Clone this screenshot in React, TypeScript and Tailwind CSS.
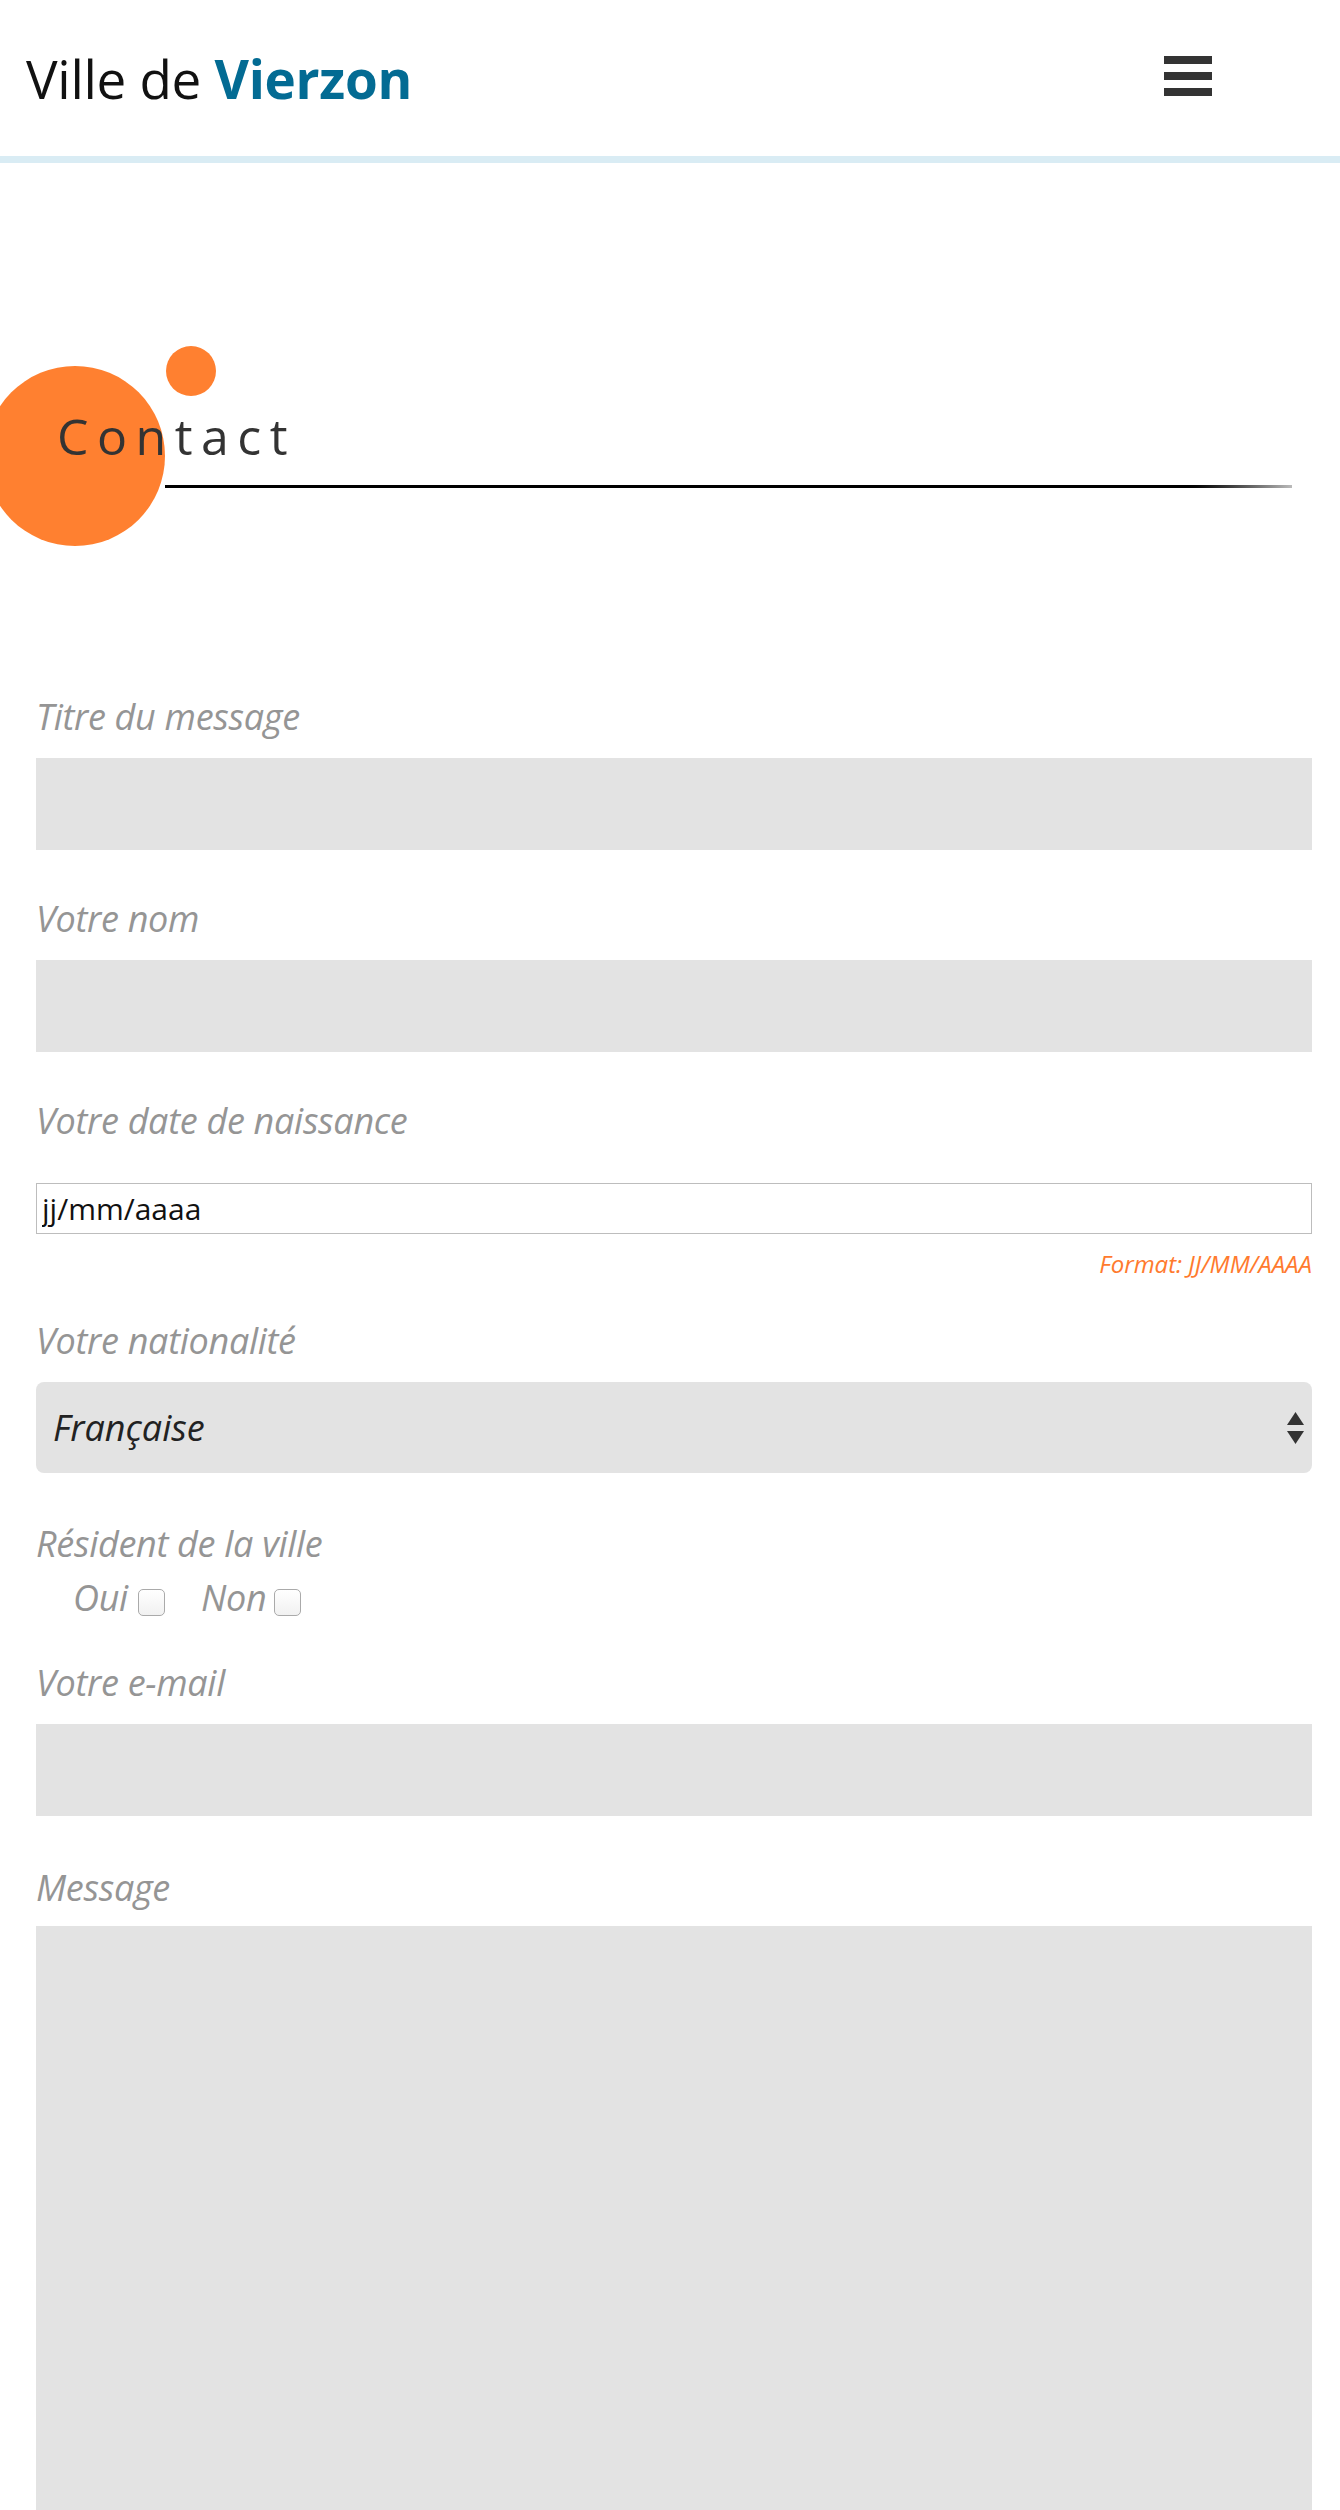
import React from "react";

const labelCls =
	"block h-[46px] leading-[46px] text-[36px] italic text-[#959595] font-['Open_Sans',sans-serif] tracking-[-0.3px]";

function Field({ label, children }: { label: string; children: React.ReactNode }) {
	return (
		<div className="flex flex-col">
			<label className={labelCls}>{label}</label>
			{children}
		</div>
	);
}

export default function App() {
	return (
		<div className="w-[1340px] bg-white font-['Open_Sans',sans-serif] overflow-hidden">
			{/* header */}
			<header className="flex h-[156px] items-center justify-between pl-[26px] pr-[128px]">
				<div className="text-[53px] leading-[53px] text-[#111] tracking-[-0.3px]">
					Ville de <span className="font-bold text-[#036b93]">Vierzon</span>
				</div>
				<button className="flex flex-col gap-[8px] -mt-[4px]" aria-label="menu">
					<span className="block h-[8px] w-[48px] bg-[#333]" />
					<span className="block h-[8px] w-[48px] bg-[#333]" />
					<span className="block h-[8px] w-[48px] bg-[#333]" />
				</button>
			</header>
			<div className="h-[7px] bg-[#d9ecf4]" />

			{/* title */}
			<section className="relative mt-[183px] h-[200px] pl-[57px] pt-[65px]">
				<div className="absolute left-[-15px] top-[20px] h-[180px] w-[180px] rounded-full bg-[#ff8030]" />
				<div className="absolute left-[166px] top-0 h-[50px] w-[50px] rounded-full bg-[#ff8030]" />
				<h1 className="relative text-[50px] leading-[50px] tracking-[0.17em] text-[#333]">Contact</h1>
				<div className="ml-[108px] mt-[24px] h-[3px] w-[1127px] bg-gradient-to-r from-black via-black via-90% to-[#bbb]" />
			</section>

			{/* form */}
			<form className="mt-[148px] flex flex-col pl-[36px] pr-[28px]">
				<Field label="Titre du message">
					<input type="text" className="mt-[18px] h-[92px] w-full bg-[#e3e3e3] outline-none" />
				</Field>

				<div className="mt-[46px]">
					<Field label="Votre nom">
						<input type="text" className="mt-[18px] h-[92px] w-full bg-[#e3e3e3] outline-none" />
					</Field>
				</div>

				<div className="mt-[46px]">
					<Field label="Votre date de naissance">
						<input
							type="text"
							defaultValue="jj/mm/aaaa"
							className="mt-[39px] h-[51px] w-full border border-[#bdbdbd] bg-white px-[5px] text-[30px] text-[#111] outline-none"
						/>
						<p className="mt-[15px] h-[30px] text-right text-[24px] leading-[30px] italic font-medium text-[#ff7a2e]">
							Format: JJ/MM/AAAA
						</p>
					</Field>
				</div>

				<div className="mt-[39px]">
					<Field label="Votre nationalité">
						<div className="relative mt-[18px]">
							<select className="h-[91px] w-full appearance-none rounded-[8px] bg-[#e3e3e3] px-[17px] text-[36px] italic text-[#222] outline-none">
								<option>Française</option>
							</select>
							<svg
								className="pointer-events-none absolute right-[8px] top-[30px]"
								width="17"
								height="32"
								viewBox="0 0 17 32"
							>
								<path d="M8.5 0 L17 13 L0 13 Z" fill="#333" />
								<path d="M0 19 L17 19 L8.5 32 Z" fill="#333" />
							</svg>
						</div>
					</Field>
				</div>

				<div className="mt-[48px]">
					<span className={labelCls}>Résident de la ville</span>
					<div className="mt-[8px] flex h-[46px] items-center pl-[37px] text-[36px] italic text-[#959595] tracking-[-0.3px]">
						<label className="flex items-center">
							Oui
							<input
								type="checkbox"
								className="ml-[10px] mt-[8px] h-[27px] w-[27px] appearance-none rounded-[5px] border border-[#aaa] bg-gradient-to-b from-white to-[#f1f1f1]"
							/>
						</label>
						<label className="ml-[36px] flex items-center">
							Non
							<input
								type="checkbox"
								className="ml-[8px] mt-[8px] h-[27px] w-[27px] appearance-none rounded-[5px] border border-[#aaa] bg-gradient-to-b from-white to-[#f1f1f1]"
							/>
						</label>
					</div>
				</div>

				<div className="mt-[39px]">
					<Field label="Votre e-mail">
						<input type="email" className="mt-[18px] h-[92px] w-full bg-[#e3e3e3] outline-none" />
					</Field>
				</div>

				<div className="mt-[49px]">
					<Field label="Message">
						<textarea className="mt-[15px] h-[640px] w-full resize-none bg-[#e3e3e3] outline-none" />
					</Field>
				</div>
			</form>
		</div>
	);
}
